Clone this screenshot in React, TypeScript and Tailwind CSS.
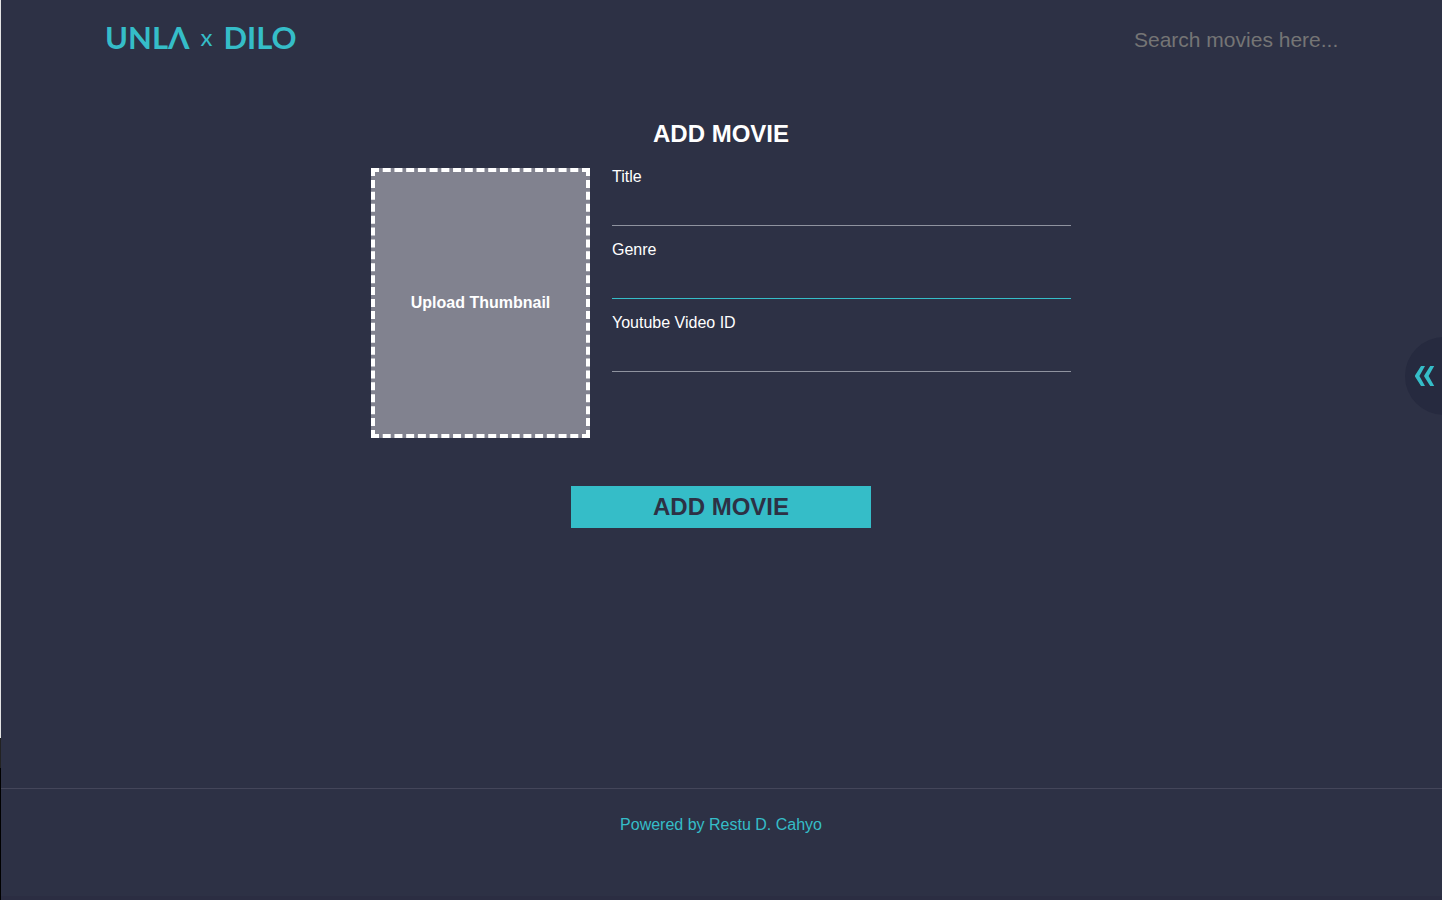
import { useState } from "react";

const fields = [
  { id: "title", label: "Title", line: "border-[#8f939f]" },
  { id: "genre", label: "Genre", line: "border-[#35bdc8]" },
  { id: "video", label: "Youtube Video ID", line: "border-[#8f939f]" },
];

export default function App() {
  const [open, setOpen] = useState(false);

  return (
    <div className="flex min-h-screen bg-[#2d3145] font-['Liberation_Sans',Arial,sans-serif] text-base text-white">
      <div className="flex w-px shrink-0 flex-col" aria-hidden="true">
        <div className="h-[738px] bg-[#e4e4e4]" />
        <div className="h-[30px] bg-[#222222]" />
        <div className="flex-1 bg-black" />
      </div>
      <div className="flex min-w-0 flex-1 flex-col border-b-4 border-[#2b2d42] pr-px">
        <header className="flex h-20 items-center justify-between px-[104px]">
          <a
            href="#"
            aria-label="UNLA x DILO"
            className="flex items-center gap-[11px] pb-1.5 font-['Lato',sans-serif] text-[31px] leading-9 font-bold text-[#35bdc8]"
          >
            <span>UNLΛ</span>
            <span className="text-2xl leading-9 font-normal">x</span>
            <span>DILO</span>
          </a>
          <input
            type="text"
            aria-label="Search movies"
            placeholder="Search movies here..."
            className="w-[203px] bg-transparent text-[21px] leading-6 outline-none placeholder:text-[#757575]"
          />
        </header>

        <main className="flex flex-1 flex-col items-center pt-10">
          <h1 className="text-2xl leading-7 font-bold">ADD MOVIE</h1>
          <form className="flex w-full max-w-[700px] flex-col items-center gap-12 pt-5" onSubmit={(e) => e.preventDefault()}>
            <div className="flex w-full gap-[22px]">
              <label className="flex h-[270px] w-[219px] shrink-0 cursor-pointer items-center justify-center border-4 border-dashed border-white bg-[#81828f] font-bold">
                Upload Thumbnail
                <input type="file" accept="image/*" className="sr-only" />
              </label>
              <div className="flex min-w-0 flex-1 flex-col gap-[15px]">
                {fields.map((field) => (
                  <div key={field.id} className="flex flex-col">
                    <label htmlFor={field.id} className="leading-[18px]">
                      {field.label}
                    </label>
                    <input
                      id={field.id}
                      type="text"
                      className={`h-10 w-full border-b bg-transparent outline-none ${field.line}`}
                    />
                  </div>
                ))}
              </div>
            </div>
            <button type="submit" className="h-[42px] w-[300px] bg-[#35bdc8] text-2xl font-bold text-[#2d3145]">
              ADD MOVIE
            </button>
          </form>
        </main>

        <footer className="-mr-px flex h-[108px] justify-center border-t border-[#44465a] pt-6 pr-px">
          <p className="text-[#35bdc8]">Powered by Restu D. Cahyo</p>
        </footer>
      </div>

      <button
        type="button"
        aria-label="Toggle menu"
        aria-expanded={open}
        onClick={() => setOpen(!open)}
        className="fixed top-[337px] -right-0.5 flex h-[78px] w-[39px] items-center justify-center rounded-l-full bg-[#262a3f] text-[#35bdc8]"
      >
        <svg viewBox="0 0 20 20" className="size-5" fill="currentColor" aria-hidden="true">
          <path d="M6 0h4L4.4 10 10 20H6L0 10.6V9.4z" />
          <path d="M15.2 0h4l-5.6 10 5.6 10h-4l-6-9.4V9.4z" />
        </svg>
      </button>
    </div>
  );
}
